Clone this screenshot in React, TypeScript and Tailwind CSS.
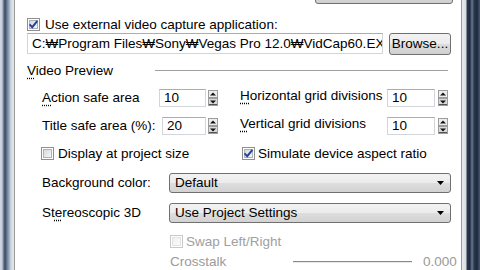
import React from "react";

function CheckBox({ id, checked, disabled }: { id: string; checked?: boolean; disabled?: boolean }) {
  return (
    <svg width="13" height="13" viewBox="0 0 13 13" className="shrink-0">
      <defs>
        <linearGradient id={id} x1="0" y1="0" x2="1" y2="1">
          <stop offset="0" stopColor={disabled ? "#f0f0f0" : "#d6d8db"} />
          <stop offset="1" stopColor={disabled ? "#fbfbfb" : "#f7f7f7"} />
        </linearGradient>
      </defs>
      <rect x="0.5" y="0.5" width="12" height="12" fill="#fff" stroke={disabled ? "#c8c8c8" : "#8e8f8f"} />
      <rect x="2.5" y="2.5" width="8" height="8" fill={`url(#${id})`} stroke={disabled ? "#e2e2e2" : "#aeb2b8"} />
      {checked && (
        <path d="M2.6 6.4 L5.2 9.2 L10.4 2.8" stroke="#24429b" strokeWidth="1.9" fill="none" />
      )}
    </svg>
  );
}

function Spinner() {
  return (
    <svg width="10" height="16" viewBox="0 0 10 16" className="shrink-0">
      <rect x="0.5" y="0.5" width="9" height="7" fill="#ededed" stroke="#9c9c9c" />
      <rect x="0.5" y="8.5" width="9" height="7" fill="#dadada" stroke="#9c9c9c" />
      <path d="M2 5.5 L8 5.5 L5 2.5 Z" fill="#111" />
      <path d="M2 10.5 L8 10.5 L5 13.5 Z" fill="#111" />
      <line x1="1" y1="14.5" x2="9" y2="14.5" stroke="#555" />
    </svg>
  );
}

function NumBox({ value, w }: { value: string; w: string }) {
  return (
    <div
      className={`${w} h-[18px] bg-white border border-[#d2d5da] border-t-[#abadb3] flex items-center pl-[4px] text-black`}
    >
      {value}
    </div>
  );
}

function Select({ value }: { value: string }) {
  return (
    <div className="w-[282px] h-[20px] rounded-[3px] border border-[#707070] bg-[linear-gradient(#f3f3f3,#ebebeb_50%,#dedede_50%,#d2d2d2)] flex items-center justify-between pl-[5px] pr-[6px]">
      <span>{value}</span>
      <svg width="7" height="4" viewBox="0 0 7 4">
        <path d="M0 0 L7 0 L3.5 4 Z" fill="#000" />
      </svg>
    </div>
  );
}

const dot = "underline decoration-dotted underline-offset-[3px]";

export default function App() {
  return (
    <div className="w-[480px] h-[270px] overflow-hidden flex font-['Liberation_Sans',Arial,sans-serif] text-[13.5px] leading-none text-black">
      <div className="w-[14px] shrink-0 bg-[linear-gradient(to_right,#d3dbe4_0px,#c2ccd8_2px,#5a6a82_4px,#3a4a62_5px,#8292a8_8px,#cfd7e0_11px,#e4e8ed_14px)]" />

      <div className="w-[448px] shrink-0 bg-white border-l border-r border-[#9a9a9a] flex flex-col">
        {/* cut-off button at top */}
        <div className="ml-[300px] -mt-[20px] w-[138px] h-[24px] rounded-[3px] border border-[#707070] bg-[linear-gradient(#f2f2f2,#ebebeb_50%,#dddddd_50%,#cfcfcf)]" />

        <div className="mt-[14px] ml-[12px] h-[13px] flex items-center gap-[5px]">
          <CheckBox id="c1" checked />
          <span>Use external video capture application:</span>
        </div>

        <div className="mt-[2px] ml-[12px] h-[22px] flex items-start gap-[6px]">
          <div className="w-[356px] h-[21px] bg-white border border-[#d2d5da] border-t-[#abadb3] flex items-center pl-[4px] overflow-hidden whitespace-nowrap">
            C:₩Program Files₩Sony₩Vegas Pro 12.0₩VidCap60.EXE
          </div>
          <div className="w-[62px] h-[22px] rounded-[3px] border border-[#707070] bg-[linear-gradient(#f2f2f2,#ebebeb_50%,#dddddd_50%,#cfcfcf)] flex items-center justify-center">
            Browse...
          </div>
        </div>

        <div className="mt-[9px] ml-[12px] h-[14px] flex items-center">
          <span className="w-[128px]">
            <span className={dot}>V</span>ideo Preview
          </span>
          <div className="w-[293px] h-[2px] border-t border-[#a0a0a0] border-b border-b-white" />
        </div>

        <div className="mt-[11px] ml-[27px] h-[18px] flex items-center">
          <span className="w-[117px]">
            <span className={dot}>A</span>ction safe area
          </span>
          <NumBox value="10" w="w-[47px]" />
          <div className="ml-[2px]">
            <Spinner />
          </div>
          <span className="ml-[22px] w-[147px] mb-[4px]">
            <span className={dot}>H</span>orizontal grid divisions
          </span>
          <NumBox value="10" w="w-[48px]" />
          <div className="ml-[3px]">
            <Spinner />
          </div>
        </div>

        <div className="mt-[10px] ml-[27px] h-[18px] flex items-center">
          <span className="w-[120px]">Title safe area (%):</span>
          <NumBox value="20" w="w-[44px]" />
          <div className="ml-[2px]">
            <Spinner />
          </div>
          <span className="ml-[22px] w-[147px] mb-[4px]">
            <span className={dot}>V</span>ertical grid divisions
          </span>
          <NumBox value="10" w="w-[48px]" />
          <div className="ml-[3px]">
            <Spinner />
          </div>
        </div>

        <div className="mt-[12px] ml-[26px] h-[13px] flex items-center">
          <div className="w-[201px] flex items-center gap-[4px]">
            <CheckBox id="c2" />
            <span>Display at project size</span>
          </div>
          <div className="flex items-center gap-[3px]">
            <CheckBox id="c3" checked />
            <span>Simulate device aspect ratio</span>
          </div>
        </div>

        <div className="mt-[13px] ml-[27px] h-[20px] flex items-center">
          <span className="w-[127px]">Background color:</span>
          <Select value="Default" />
        </div>

        <div className="mt-[10px] ml-[27px] h-[20px] flex items-center">
          <span className="w-[127px]">
            St<span className={dot}>e</span>reoscopic 3D
          </span>
          <Select value="Use Project Settings" />
        </div>

        <div className="mt-[12px] ml-[155px] h-[13px] flex items-center gap-[3px] text-[#a0a0a0]">
          <CheckBox id="c4" disabled />
          <span>Swap Left/Right</span>
        </div>

        <div className="mt-[7px] ml-[155px] h-[14px] flex items-center text-[#9a9a9a]">
          <span className="w-[123px]">Crosstalk</span>
          <div className="w-[119px] h-[2px] border-t border-[#8a8a8a] border-b border-b-[#e8e8e8]" />
          <span className="ml-[11px]">0.000</span>
        </div>
      </div>

      <div className="w-[18px] shrink-0 bg-[linear-gradient(to_right,#e6eaee_0px,#d8dee5_4px,#2a374d_5px,#1f2b3f_8px,#6a7a92_10px,#2c3a50_12px,#1d283a_15px,#4a5870_18px)]" />
    </div>
  );
}
